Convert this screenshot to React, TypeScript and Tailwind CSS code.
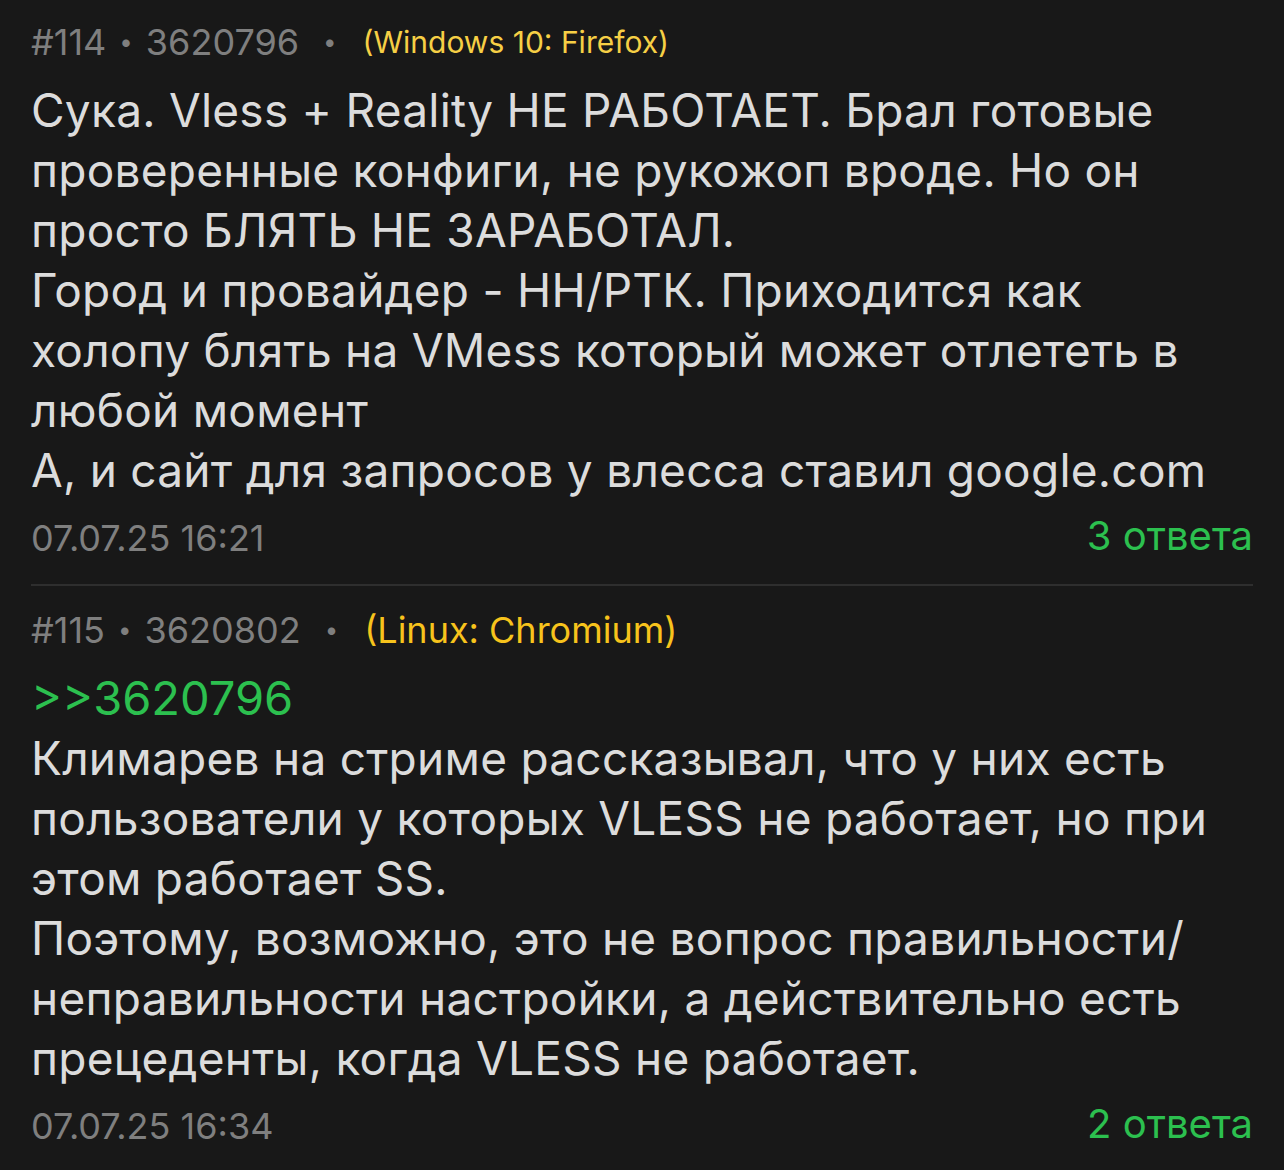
import React from "react";

type Post = {
  num: number;
  id: string;
  agent: string;
  agentSize: string;
  agentColor: string;
  reply?: string;
  lines: string[];
  date: string;
  answers: string;
};

const posts: Post[] = [
  {
    num: 114,
    id: "3620796",
    agent: "(Windows 10: Firefox)",
    agentSize: "text-[30px]",
    agentColor: "text-[#f6cf45]",
    lines: [
      "Сука. Vless + Reality НЕ РАБОТАЕТ. Брал готовые",
      "проверенные конфиги, не рукожоп вроде. Но он",
      "просто БЛЯТЬ НЕ ЗАРАБОТАЛ.",
      "Город и провайдер - НН/РТК. Приходится как",
      "холопу блять на VMess который может отлететь в",
      "любой момент",
      "А, и сайт для запросов у влесса ставил google.com",
    ],
    date: "07.07.25 16:21",
    answers: "3 ответа",
  },
  {
    num: 115,
    id: "3620802",
    agent: "(Linux: Chromium)",
    agentSize: "text-[36px]",
    agentColor: "text-[#f7c31c]",
    reply: ">>3620796",
    lines: [
      "Климарев на стриме рассказывал, что у них есть",
      "пользователи у которых VLESS не работает, но при",
      "этом работает SS.",
      "Поэтому, возможно, это не вопрос правильности/",
      "неправильности настройки, а действительно есть",
      "прецеденты, когда VLESS не работает.",
    ],
    date: "07.07.25 16:34",
    answers: "2 ответа",
  },
];

function PostCard({ post, last }: { post: Post; last: boolean }) {
  return (
    <div className={last ? "pt-[14px]" : "pb-[8px] border-b-2 border-[#2e2e2e]"}>
      <div className="flex items-center h-[60px] mb-[8px] text-[36px] text-[#7f7f7f]">
        <span>#{post.num}</span>
        <span className="mx-[13px] text-[24px]">•</span>
        <span>{post.id}</span>
        <span className="ml-[24px] mr-[26px] text-[24px]">•</span>
        <span className={`${post.agentSize} ${post.agentColor}`}>{post.agent}</span>
      </div>
      <div className="text-[46px] leading-[60px] tracking-[0.25px] text-[#dcdcdc]">
        {post.reply && <div className="text-[47px] tracking-normal text-[#2cc04f]">{post.reply}</div>}
        {post.lines.map((line, i) => (
          <div key={i} className="whitespace-nowrap">
            {line}
          </div>
        ))}
      </div>
      <div className="flex items-center justify-between h-[76px]">
        <span className="text-[36px] text-[#7f7f7f]">{post.date}</span>
        <span className="text-[40px] text-[#2cc04f] -mt-[4px]">{post.answers}</span>
      </div>
    </div>
  );
}

export default function App() {
  return (
    <div
      className="w-[1284px] h-[1170px] bg-[#181818] px-[31px] pt-[12px] overflow-hidden"
      style={{ fontFamily: "Inter, 'Noto Sans', sans-serif" }}
    >
      {posts.map((p, i) => (
        <PostCard key={p.num} post={p} last={i === posts.length - 1} />
      ))}
    </div>
  );
}
